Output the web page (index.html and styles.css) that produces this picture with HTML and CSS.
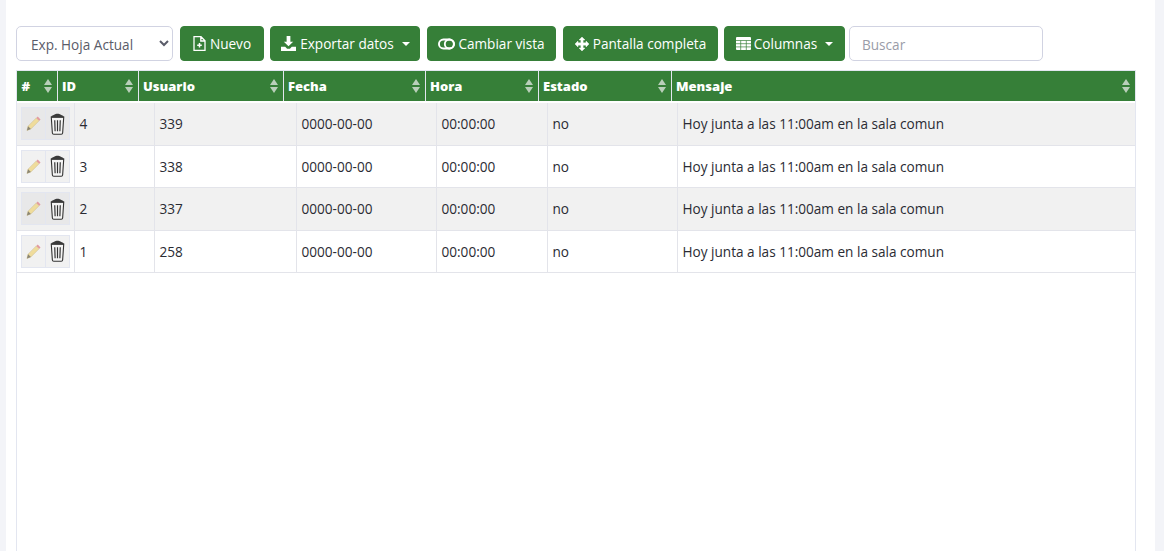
FILE: index.html
```html
<!DOCTYPE html>
<html lang="es">
<head>
<meta charset="utf-8">
<title>Mensajes</title>
<link rel="stylesheet" href="styles.css">
</head>
<body>
<main class="card">
  <div class="toolbar">
    <select class="export"><option>Exp. Hoja Actual</option></select>
    <button class="btn b-new"><svg class="ic" viewBox="0 0 13 15"><path d="M1 .7h7L12 4.700V14.300H1z M7.800 1V5h4" fill="none" stroke="#fff" stroke-width="1.300"/><path d="M6.500 7v4.500M4.200 9.250h4.600" stroke="#fff" stroke-width="1.500"/></svg>Nuevo</button>
    <button class="btn b-exp"><svg class="ic ic-dl" viewBox="0 0 16 16"><path d="M6 0h4v6h3l-5 5-5-5h3z" fill="#fff"/><path d="M0 11.500h4.500l2 2h3l2-2H16V16H0z" fill="#fff"/></svg>Exportar datos<span class="caret"></span></button>
    <button class="btn b-view"><svg class="ic ic-tg" viewBox="0 0 18 12"><rect x="1" y="1.200" width="16" height="9.600" rx="4.800" fill="none" stroke="#fff" stroke-width="2"/><circle cx="12" cy="6" r="4.800" fill="none" stroke="#fff" stroke-width="2"/></svg>Cambiar vista</button>
    <button class="btn b-full"><svg class="ic ic-mv" viewBox="0 0 16 16"><path d="M8 0l3.400 3.400H9.300v3.300h3.300V4.600L16 8l-3.400 3.400V9.300H9.300v3.300h2.100L8 16l-3.400-3.400h2.100V9.300H3.400v2.100L0 8l3.400-3.400v2.100h3.300V3.400H4.600z" fill="#fff" stroke="#fff" stroke-width=".5"/></svg>Pantalla completa</button>
    <button class="btn b-col"><svg class="ic ic-tb" viewBox="0 0 15 13"><path d="M1 0h13a1 1 0 0 1 1 1v11a1 1 0 0 1-1 1H1a1 1 0 0 1-1-1V1a1 1 0 0 1 1-1z" fill="#fff"/><path d="M0 3.500h15M0 6.700h15M0 9.900h15M4.700 3.500V13M10.300 3.500V13" stroke="#367f38" stroke-width=".7"/></svg>Columnas<span class="caret"></span></button>
    <input class="search" type="text" placeholder="Buscar">
  </div>
  <div class="frame">
    <table class="thead">
      <colgroup><col class="h1"><col class="h2"><col class="h3"><col class="h4"><col class="h5"><col class="h6"><col></colgroup>
      <tr>
        <th>#<span class="sort"></span></th><th>ID<span class="sort"></span></th><th>Usuario<span class="sort"></span></th><th>Fecha<span class="sort"></span></th><th>Hora<span class="sort"></span></th><th>Estado<span class="sort"></span></th><th>Mensaje<span class="sort"></span></th>
      </tr>
    </table>
    <table class="tbody">
      <colgroup><col class="c1"><col class="c2"><col class="c3"><col class="c4"><col class="c5"><col class="c6"><col></colgroup>
      <tr class="odd">
        <td class="acts"><div class="group"><span class="act"><svg class="pen" viewBox="0 0 16 16"><path d="M1 15.500l1.200-4.700L11 2l3 3-8.800 8.800z" fill="#efdc9c" stroke="#c9b98a" stroke-width=".5"/><path d="M11 2l1.500-1.400 3 3L14 5z" fill="#e29a9f"/><path d="M1 15.500l1.200-4.700 3 3z" fill="#8b8674"/></svg></span><span class="act"><svg class="bin" viewBox="0 0 16 24"><path d="M1.200 4.500h13.600l-1.200 17.300a1.500 1.500 0 0 1-1.500 1.400H3.900a1.500 1.500 0 0 1-1.500-1.400z" fill="#f4f4f4" stroke="#333" stroke-width="1.200"/><path d="M.8 4.800c.4-2.600 3-2.300 4-3.300s5.400-1 6.400 0 3.600.7 4 3.300z" fill="#3a3a3a"/><path d="M5 8l.4 12M8 8v12M11 8l-.4 12" stroke="#333" stroke-width="1.300"/></svg></span></div></td>
        <td>4</td><td>339</td><td>0000-00-00</td><td>00:00:00</td><td>no</td><td>Hoy junta a las 11:00am en la sala comun</td>
      </tr>
      <tr>
        <td class="acts"><div class="group"><span class="act"><svg class="pen" viewBox="0 0 16 16"><path d="M1 15.500l1.200-4.700L11 2l3 3-8.800 8.800z" fill="#efdc9c" stroke="#c9b98a" stroke-width=".5"/><path d="M11 2l1.500-1.400 3 3L14 5z" fill="#e29a9f"/><path d="M1 15.500l1.200-4.700 3 3z" fill="#8b8674"/></svg></span><span class="act"><svg class="bin" viewBox="0 0 16 24"><path d="M1.200 4.500h13.600l-1.200 17.300a1.500 1.500 0 0 1-1.500 1.400H3.900a1.500 1.500 0 0 1-1.500-1.400z" fill="#f4f4f4" stroke="#333" stroke-width="1.200"/><path d="M.8 4.800c.4-2.600 3-2.300 4-3.300s5.400-1 6.400 0 3.600.7 4 3.300z" fill="#3a3a3a"/><path d="M5 8l.4 12M8 8v12M11 8l-.4 12" stroke="#333" stroke-width="1.300"/></svg></span></div></td>
        <td>3</td><td>338</td><td>0000-00-00</td><td>00:00:00</td><td>no</td><td>Hoy junta a las 11:00am en la sala comun</td>
      </tr>
      <tr class="odd">
        <td class="acts"><div class="group"><span class="act"><svg class="pen" viewBox="0 0 16 16"><path d="M1 15.500l1.200-4.700L11 2l3 3-8.800 8.800z" fill="#efdc9c" stroke="#c9b98a" stroke-width=".5"/><path d="M11 2l1.500-1.400 3 3L14 5z" fill="#e29a9f"/><path d="M1 15.500l1.200-4.700 3 3z" fill="#8b8674"/></svg></span><span class="act"><svg class="bin" viewBox="0 0 16 24"><path d="M1.200 4.500h13.600l-1.200 17.300a1.500 1.500 0 0 1-1.500 1.400H3.900a1.500 1.500 0 0 1-1.500-1.400z" fill="#f4f4f4" stroke="#333" stroke-width="1.200"/><path d="M.8 4.800c.4-2.600 3-2.300 4-3.300s5.400-1 6.400 0 3.600.7 4 3.300z" fill="#3a3a3a"/><path d="M5 8l.4 12M8 8v12M11 8l-.4 12" stroke="#333" stroke-width="1.300"/></svg></span></div></td>
        <td>2</td><td>337</td><td>0000-00-00</td><td>00:00:00</td><td>no</td><td>Hoy junta a las 11:00am en la sala comun</td>
      </tr>
      <tr>
        <td class="acts"><div class="group"><span class="act"><svg class="pen" viewBox="0 0 16 16"><path d="M1 15.500l1.200-4.700L11 2l3 3-8.800 8.800z" fill="#efdc9c" stroke="#c9b98a" stroke-width=".5"/><path d="M11 2l1.500-1.400 3 3L14 5z" fill="#e29a9f"/><path d="M1 15.500l1.200-4.700 3 3z" fill="#8b8674"/></svg></span><span class="act"><svg class="bin" viewBox="0 0 16 24"><path d="M1.200 4.500h13.600l-1.200 17.300a1.500 1.500 0 0 1-1.500 1.400H3.900a1.500 1.500 0 0 1-1.500-1.400z" fill="#f4f4f4" stroke="#333" stroke-width="1.200"/><path d="M.8 4.800c.4-2.600 3-2.300 4-3.300s5.400-1 6.400 0 3.600.7 4 3.300z" fill="#3a3a3a"/><path d="M5 8l.4 12M8 8v12M11 8l-.4 12" stroke="#333" stroke-width="1.300"/></svg></span></div></td>
        <td>1</td><td>258</td><td>0000-00-00</td><td>00:00:00</td><td>no</td><td>Hoy junta a las 11:00am en la sala comun</td>
      </tr>
    </table>
  </div>
</main>
</body>
</html>
```
FILE: styles.css
```css
* { box-sizing: border-box; }
html, body { height: 100%; }
body {
  margin: 0;
  overflow: hidden;
  background: #f3f4f8;
  font-family: "Open Sans", "Noto Sans", sans-serif;
  font-size: 13.600px;
  color: #2a2b33;
}
.card {
  margin: 0 9px 0 6px;
  height: 100%;
  overflow: hidden;
  background: #fff;
  padding: 26px 19px 0 10px;
}
.toolbar {
  display: flex;
  height: 35px;
  margin-bottom: 9px;
}
.export {
  width: 157px;
  height: 35px;
  border: 1px solid #d1d3e2;
  border-radius: 5px;
  background: #fff;
  color: #5a5c69;
  font: 13.600px "Open Sans", sans-serif;
  padding: 1px 0 0 10px;
  margin-right: 7px;
}
.btn {
  display: flex;
  align-items: center;
  justify-content: center;
  height: 35px;
  border: 1px solid #367f38;
  border-radius: 4px;
  background: #367f38;
  color: #fff;
  font: 13.600px "Open Sans", sans-serif;
  padding: 0;
  white-space: nowrap;
}
.b-new { width: 84px; margin-right: 6px; }
.b-exp { width: 150px; margin-right: 7px; padding-left: 1px; }
.b-view { width: 129px; margin-right: 7px; }
.b-full { width: 155px; margin-right: 6px; }
.b-col { width: 121px; margin-right: 4px; }
.ic { width: 13px; height: 15px; margin-right: 4px; }
.ic-dl { width: 15px; }
.ic-tg { width: 17px; height: 12px; margin-right: 3px; }
.ic-mv { width: 14px; height: 14px; margin-right: 4px; }
.ic-tb { width: 15px; height: 13px; margin-right: 3px; }
.caret {
  width: 0;
  height: 0;
  margin-left: 8px;
  border-top: 4px solid #fff;
  border-left: 4px solid transparent;
  border-right: 4px solid transparent;
}
.search {
  width: 194px;
  height: 35px;
  border: 1px solid #d1d3e2;
  border-radius: 5px;
  padding: 2px 12px 0;
  font: 13.600px "Open Sans", sans-serif;
}
.search::placeholder { color: #9a9ca8; }
.frame {
  height: 600px;
  border: 1px solid #e3e6f0;
}
table {
  width: 100%;
  border-collapse: collapse;
  table-layout: fixed;
}
.h1 { width: 40px; }
.h2 { width: 81px; }
.h3 { width: 145px; }
.h4 { width: 142px; }
.h5 { width: 113px; }
.h6 { width: 133px; }
.c1 { width: 57px; }
.c2 { width: 80px; }
.c3 { width: 142px; }
.c4 { width: 140px; }
.c5 { width: 111px; }
.c6 { width: 130px; }
.thead th {
  position: relative;
  height: 30px;
  padding: 0 0 0 4.500px;
  background: #367f38;
  color: #fff;
  font-weight: 800;
  font-size: 13px;
  text-align: left;
  border-left: 1px solid #e3e6f0;
}
.thead th:first-child { border-left: 0; }
.sort {
  position: absolute;
  right: 5px;
  top: 8px;
  width: 8px;
  height: 14px;
}
.sort::before, .sort::after {
  content: "";
  position: absolute;
  left: 0;
  border-left: 4px solid transparent;
  border-right: 4px solid transparent;
}
.sort::before { top: 0; border-bottom: 6px solid #b9cfba; }
.sort::after { bottom: 0; border-top: 6px solid #b9cfba; }
.tbody { margin-top: 1.500px; }
.tbody td {
  height: 42.500px;
  padding: 0 0 0 5px;
  border: 1px solid #e3e4ea;
  border-top: 0;
  white-space: nowrap;
}
.tbody td:first-child { border-left: 0; }
.tbody td:last-child { border-right: 0; padding-left: 5px; }
.odd td { background: #f1f1f1; }
.tbody .acts { padding-left: 4px; }
.group {
  display: flex;
  width: 49px;
  height: 33px;
  background: #f1f1f1;
  border: 1px solid #e3e6f0;
}
.odd .group { background: #e8e8e9; }
.act {
  flex: 1;
  display: flex;
  align-items: center;
  justify-content: center;
}
.act:first-child { border-right: 1px solid #e3e6f0; }
.pen { width: 15px; height: 15px; }
.bin { width: 15px; height: 22px; }
```
